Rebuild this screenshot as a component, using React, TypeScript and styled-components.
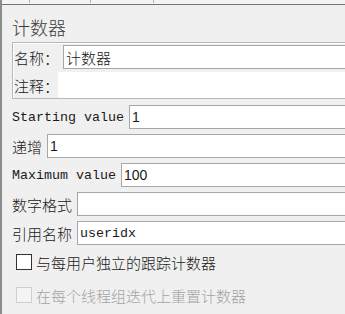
import React from "react";
import styled, { createGlobalStyle } from "styled-components";

const Global = createGlobalStyle`
  html, body { margin: 0; padding: 0; background: #f0f0f0; overflow: hidden; }
  body { font-family: "Noto Sans CJK SC", "Liberation Sans", sans-serif; }
  * { box-sizing: border-box; }
`;

const Root = styled.div`
  width: 345px;
  height: 314px;
  overflow: hidden;
  border-left: 2px solid #8c8c8c;
  background: #f0f0f0;
  display: flex;
  flex-direction: column;
`;

const Strip = styled.div`
  height: 4px;
  display: flex;
  align-items: flex-start;
  background: #f4f4f4;
`;

const Tick = styled.span<{ $ml: number }>`
  width: 1px;
  height: 3px;
  margin-left: ${(p) => p.$ml}px;
  background: #b4b4b4;
`;

const Panel = styled.div`
  border-top: 1px solid #737373;
  width: 380px;
  padding: 0 0 0 10px;
  display: flex;
  flex-direction: column;
`;

const Title = styled.div`
  margin-top: 9px;
  height: 26px;
  line-height: 26px;
  font-size: 18px;
  font-weight: 300;
  color: #3c3c3c;
  font-family: "Noto Sans CJK SC", sans-serif;
`;

const NameBox = styled.div`
  margin-top: 2px;
  border: 1px solid #b9b9b9;
  box-shadow: inset 1px 1px 0 #ffffff;
  padding: 2px 0 0 1px;
  display: flex;
  flex-direction: column;
  gap: 3px;
`;

const BoxRow = styled.div<{ $h: number }>`
  display: flex;
  align-items: center;
  height: ${(p) => p.$h}px;
`;

const Label = styled.span<{ $mono?: boolean }>`
  flex: none;
  white-space: pre;
  color: #1a1a1a;
  font-weight: ${(p) => (p.$mono ? 400 : 300)};
  font-family: ${(p) =>
    p.$mono ? `"Liberation Mono", monospace` : `"Noto Sans CJK SC", sans-serif`};
  font-size: ${(p) => (p.$mono ? "13.33px" : "15px")};
`;

const Field = styled.input<{ $mono?: boolean; $cjk?: boolean; $ml?: number }>`
  flex: 1;
  min-width: 0;
  height: 24px;
  margin: 0 0 0 ${(p) => p.$ml ?? 5}px;
  padding: 0 0 0 2px;
  border: 1px solid #a7a7a7;
  background: #ffffff;
  color: #1a1a1a;
  outline: none;
  font-weight: ${(p) => (p.$cjk ? 300 : 400)};
  font-family: ${(p) =>
    p.$mono
      ? `"Liberation Mono", monospace`
      : p.$cjk
      ? `"Noto Sans CJK SC", sans-serif`
      : `"Liberation Sans", sans-serif`};
  font-size: ${(p) => (p.$mono ? "13.33px" : p.$cjk ? "15px" : "14px")};
`;

const Comment = styled.div`
  flex: 1;
  height: 26px;
  margin-left: -1px;
  background: #ffffff;
`;

const Fields = styled.div`
  margin-top: 6px;
  display: flex;
  flex-direction: column;
  gap: 5px;
`;

const Row = styled.div`
  display: flex;
  align-items: center;
  height: 24px;
`;

const Checks = styled.div`
  margin-top: 4px;
  display: flex;
  flex-direction: column;
  gap: 7px;
  padding-left: 4px;
`;

const CheckRow = styled.label<{ $disabled?: boolean }>`
  display: flex;
  align-items: center;
  gap: 4px;
  height: 26px;
  font-family: "Noto Sans CJK SC", sans-serif;
  font-size: 15px;
  font-weight: 300;
  color: ${(p) => (p.$disabled ? "#a3a3a3" : "#1a1a1a")};
`;

const Box = styled.span<{ $disabled?: boolean }>`
  flex: none;
  width: 16px;
  height: 16px;
  border: 1px solid ${(p) => (p.$disabled ? "#cfcfcf" : "#333333")};
  background: ${(p) => (p.$disabled ? "#f4f4f4" : "#ffffff")};
`;

export default function App() {
  return (
    <>
      <Global />
      <Root>
        <Strip>
          <Tick $ml={27} />
          <Tick $ml={60} />
          <Tick $ml={62} />
        </Strip>
        <Panel>
          <Title>计数器</Title>
          <NameBox>
            <BoxRow $h={24}>
              <Label>名称：</Label>
              <Field $cjk $ml={4} defaultValue="计数器" readOnly />
            </BoxRow>
            <BoxRow $h={26}>
              <Label>注释：</Label>
              <Comment />
            </BoxRow>
          </NameBox>
          <Fields>
            <Row>
              <Label $mono>Starting value</Label>
              <Field defaultValue="1" readOnly />
            </Row>
            <Row>
              <Label>递增</Label>
              <Field defaultValue="1" readOnly />
            </Row>
            <Row>
              <Label $mono>Maximum value</Label>
              <Field defaultValue="100" readOnly />
            </Row>
            <Row>
              <Label>数字格式</Label>
              <Field defaultValue="" readOnly />
            </Row>
            <Row>
              <Label>引用名称</Label>
              <Field $mono defaultValue="useridx" readOnly />
            </Row>
          </Fields>
          <Checks>
            <CheckRow>
              <Box />
              与每用户独立的跟踪计数器
            </CheckRow>
            <CheckRow $disabled>
              <Box $disabled />
              在每个线程组迭代上重置计数器
            </CheckRow>
          </Checks>
        </Panel>
      </Root>
    </>
  );
}
